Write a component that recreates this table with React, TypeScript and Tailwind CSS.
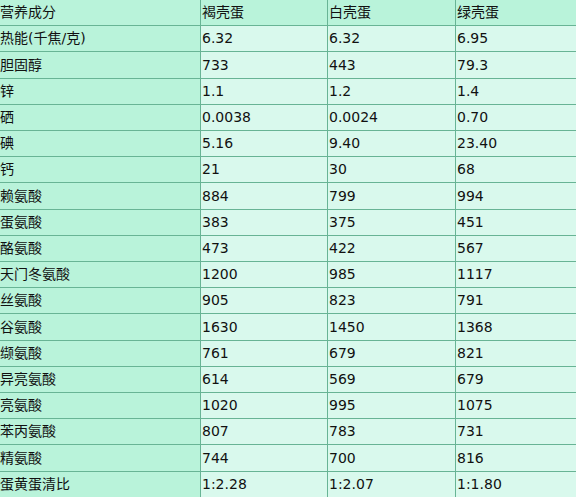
import React from 'react';

const rows: [string, string, string, string][] = [
  ['热能(千焦/克)', '6.32', '6.32', '6.95'],
  ['胆固醇', '733', '443', '79.3'],
  ['锌', '1.1', '1.2', '1.4'],
  ['硒', '0.0038', '0.0024', '0.70'],
  ['碘', '5.16', '9.40', '23.40'],
  ['钙', '21', '30', '68'],
  ['赖氨酸', '884', '799', '994'],
  ['蛋氨酸', '383', '375', '451'],
  ['酪氨酸', '473', '422', '567'],
  ['天门冬氨酸', '1200', '985', '1117'],
  ['丝氨酸', '905', '823', '791'],
  ['谷氨酸', '1630', '1450', '1368'],
  ['缬氨酸', '761', '679', '821'],
  ['异亮氨酸', '614', '569', '679'],
  ['亮氨酸', '1020', '995', '1075'],
  ['苯丙氨酸', '807', '783', '731'],
  ['精氨酸', '744', '700', '816'],
  ['蛋黄蛋清比', '1:2.28', '1:2.07', '1:1.80'],
];

const cols = 'grid grid-cols-[200px_127px_128px_1fr] flex-1';
const cell = 'flex items-center whitespace-nowrap overflow-hidden';
const data = cell + ' border-l border-[#68b495] pl-[1px]';

export default function App() {
  return (
    <div
      className="w-[576px] h-[497px] overflow-hidden flex flex-col bg-[#d9f9ed] text-[14px] text-[#111]"
      style={{ fontFamily: '"DejaVu Sans", "Noto Sans CJK SC", sans-serif' }}
    >
      <div className={cols + ' bg-[#b9f3da]'}>
        <div className={cell}>营养成分</div>
        <div className={data}>褐壳蛋</div>
        <div className={data}>白壳蛋</div>
        <div className={data}>绿壳蛋</div>
      </div>
      {rows.map((r) => (
        <div key={r[0]} className={cols + ' border-t border-[#68b495]'}>
          <div className={cell + ' bg-[#b9f3da]'}>{r[0]}</div>
          <div className={data}>{r[1]}</div>
          <div className={data}>{r[2]}</div>
          <div className={data}>{r[3]}</div>
        </div>
      ))}
    </div>
  );
}
